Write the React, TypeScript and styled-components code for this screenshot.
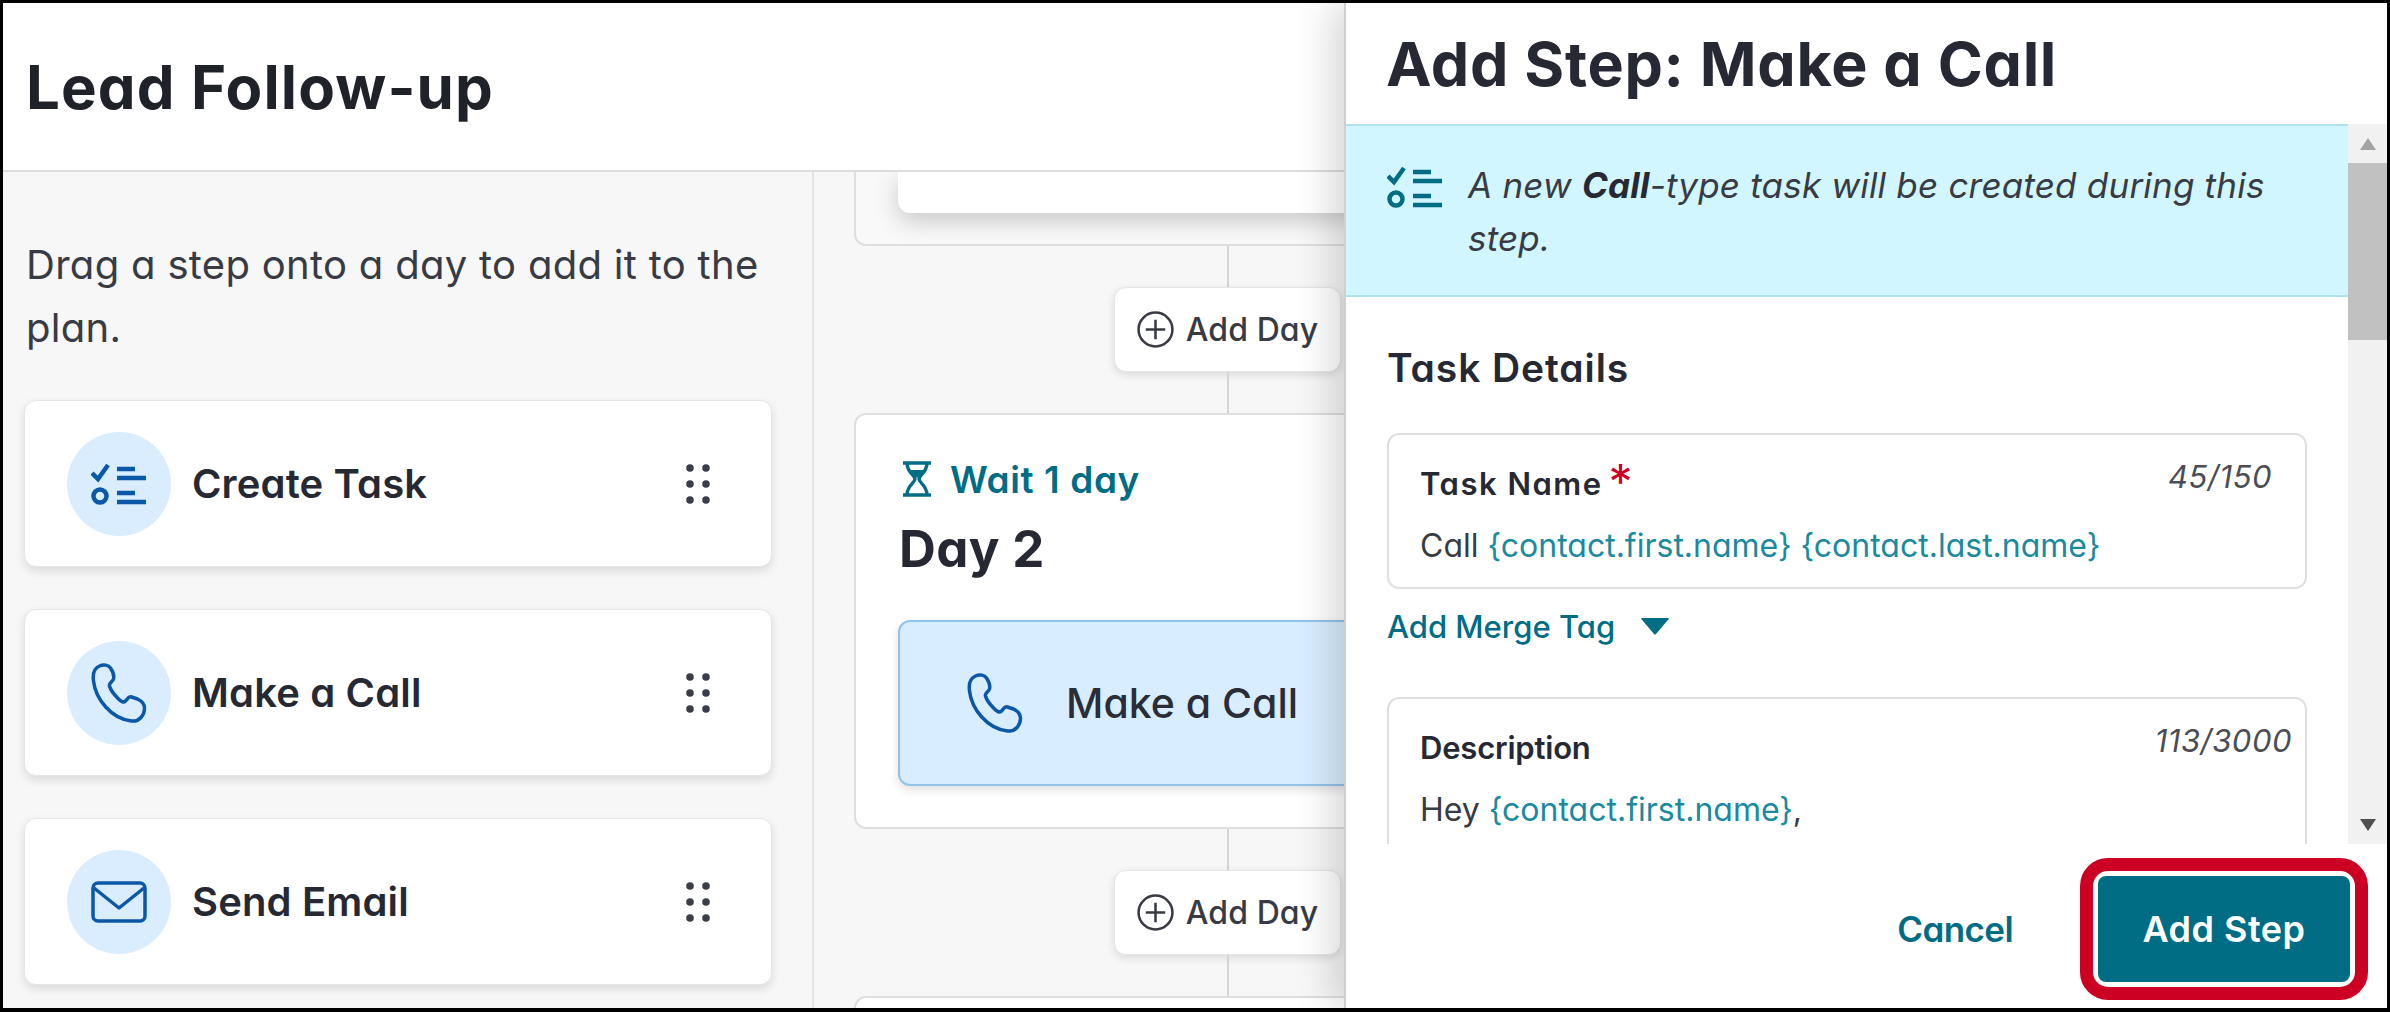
import React from "react";
import styled, { createGlobalStyle } from "styled-components";

const Global = createGlobalStyle`
  html, body { margin: 0; padding: 0; background: #fff; }
  body {
    font-family: Inter, "Open Sans", "Liberation Sans", sans-serif;
    font-feature-settings: "cv11" 1;
    color: #262933;
  }
  * { box-sizing: border-box; }
`;

const Frame = styled.div`
  width: 2390px;
  height: 1012px;
  border: 3px solid #000;
  border-bottom-width: 4px;
  display: flex;
  overflow: hidden;
  background: #fff;
`;

const Workspace = styled.div`
  width: 1341px;
  flex: none;
  display: flex;
  flex-direction: column;
  overflow: hidden;
`;

const Header = styled.header`
  height: 169px;
  flex: none;
  display: flex;
  align-items: center;
  padding: 0 0 0 23px;
  background: #fff;
  border-bottom: 2px solid #dcdcdc;
  position: relative;
  z-index: 2;
`;

const PageTitle = styled.h1`
  margin: 0;
  font-size: 60px;
  font-weight: 700;
  letter-spacing: 1.1px;
  color: #1f2229;
`;

const Canvas = styled.div`
  flex: 1;
  display: flex;
  min-height: 0;
  background: #f7f7f7;
`;

const Sidebar = styled.aside`
  width: 811px;
  flex: none;
  padding: 61px 0 0 21px;
  border-right: 2px solid #e4e4e4;
`;

const Hint = styled.p`
  margin: 0 0 41px 2px;
  font-size: 40px;
  line-height: 63px;
  font-weight: 400;
  letter-spacing: 0.3px;
  color: #383b44;
`;

const StepList = styled.div`
  display: flex;
  flex-direction: column;
  gap: 42px;
  width: 748px;
`;

const StepCard = styled.div`
  height: 167px;
  display: flex;
  align-items: center;
  padding: 0 61px 0 42px;
  background: #fff;
  border: 1px solid #e6e6e6;
  border-radius: 12px;
  box-shadow: 0 4px 10px rgba(0, 0, 0, 0.12);
`;

const IconCircle = styled.span`
  width: 104px;
  height: 104px;
  flex: none;
  border-radius: 50%;
  background: #d9edff;
  color: #0b57a8;
  display: flex;
  align-items: center;
  justify-content: center;
`;

const StepLabel = styled.span`
  flex: 1;
  margin-left: 21px;
  font-size: 40px;
  font-weight: 600;
  letter-spacing: 0.15px;
  color: #262933;
`;

const Plan = styled.section`
  flex: 1;
  min-width: 0;
  padding-left: 40px;
  overflow: hidden;
`;

const PlanColumn = styled.div`
  width: 747px;
  display: flex;
  flex-direction: column;
  align-items: center;
`;

const CutCard = styled.div`
  width: 100%;
  height: 74px;
  flex: none;
  padding: 0 0 0 42px;
  background: #f9f9f9;
  border: 2px solid #dedede;
  border-top: 0;
  border-radius: 0 0 12px 12px;
`;

const CutStep = styled.div`
  height: 41px;
  background: #fff;
  border-radius: 0 0 12px 12px;
  box-shadow: 0 8px 24px rgba(0, 0, 0, 0.2);
`;

const Connector = styled.div`
  width: 2px;
  height: 41px;
  flex: none;
  background: #d4d4d4;
`;

const AddDay = styled.button`
  width: 227px;
  height: 85px;
  flex: none;
  padding: 0;
  display: flex;
  align-items: center;
  justify-content: center;
  gap: 12px;
  font: inherit;
  font-size: 32px;
  font-weight: 500;
  letter-spacing: 0.1px;
  color: #383b44;
  background: #fff;
  border: 1px solid #e6e6e6;
  border-radius: 12px;
  box-shadow: 0 3px 8px rgba(0, 0, 0, 0.12);
`;

const DayCard = styled.div`
  width: 100%;
  height: ${(p: { $h: number }) => p.$h}px;
  flex: none;
  padding: 45px 0 0 42px;
  background: #fff;
  border: 2px solid #dedede;
  border-radius: 12px;
`;

const WaitRow = styled.div`
  display: flex;
  align-items: center;
  gap: 19px;
  height: 38px;
  padding-left: 5px;
  font-size: 37px;
  font-weight: 600;
  letter-spacing: 0.6px;
  color: #006d85;
`;

const DayTitle = styled.h2`
  margin: 0;
  height: 122px;
  display: flex;
  align-items: center;
  padding: 0 0 22px 1px;
  font-size: 51px;
  font-weight: 700;
  letter-spacing: 0.4px;
  color: #262933;
`;

const PlacedStep = styled.div`
  height: 166px;
  width: 703px;
  display: flex;
  align-items: center;
  gap: 43px;
  padding-left: 67px;
  font-size: 41px;
  font-weight: 500;
  color: #2a2d38;
  background: #d8edff;
  border: 2px solid #93c3ea;
  border-radius: 12px;
  box-shadow: 0 4px 10px rgba(0, 0, 0, 0.12);
  svg { color: #0b57a8; }
`;

const Drawer = styled.aside`
  flex: 1;
  min-width: 0;
  display: flex;
  flex-direction: column;
  background: #fff;
  border-left: 2px solid #cfcfcf;
  box-shadow: -12px 0 36px rgba(0, 0, 0, 0.16);
  position: relative;
  z-index: 3;
`;

const DrawerHeader = styled.div`
  height: 121px;
  flex: none;
  display: flex;
  align-items: center;
  padding: 0 0 0 40px;
`;

const DrawerTitle = styled.h2`
  margin: 0;
  font-size: 61px;
  font-weight: 700;
  letter-spacing: 0.7px;
  color: #262933;
`;

const DrawerBody = styled.div`
  height: 720px;
  flex: none;
  display: flex;
`;

const Scroller = styled.div`
  flex: 1;
  min-width: 0;
  overflow: hidden;
`;

const InfoBox = styled.div`
  height: 173px;
  display: flex;
  gap: 25px;
  padding: 33px 40px 0 41px;
  background: #d2f6ff;
  border-top: 2px solid #aee2ec;
  border-bottom: 2px solid #aee2ec;
  color: #006d85;
  svg { margin-top: 7px; }
`;

const InfoText = styled.p`
  margin: 0;
  font-size: 35px;
  line-height: 53px;
  font-style: italic;
  letter-spacing: 0.2px;
  color: #383b44;
  b { font-weight: 700; color: #262933; }
`;

const Section = styled.div`
  padding: 0 41px 0 41px;
`;

const SectionTitle = styled.h3`
  margin: 0;
  height: 136px;
  display: flex;
  align-items: center;
  padding-top: 5px;
  font-size: 39px;
  font-weight: 600;
  letter-spacing: 0.9px;
  color: #262933;
`;

const Field = styled.div`
  height: ${(p: { $h: number }) => p.$h}px;
  padding: 29px 0 0 31px;
  background: #fff;
  border: 2px solid #dfdfdf;
  border-radius: 12px;
`;

const FieldHead = styled.div`
  display: flex;
  justify-content: space-between;
  height: 46px;
`;

const FieldLabel = styled.label`
  display: flex;
  align-items: flex-start;
  gap: 6px;
  font-size: 31px;
  line-height: 40px;
  font-weight: 600;
  letter-spacing: ${(p: { $ls: number }) => p.$ls}px;
  color: #262933;
`;

const Star = styled.span`
  font-size: 48px;
  line-height: 36px;
  font-weight: 400;
  letter-spacing: 0;
  color: #cc0022;
`;

const Count = styled.span`
  margin-right: ${(p: { $right: number }) => p.$right}px;
  margin-top: -7px;
  font-size: 31px;
  line-height: 40px;
  font-style: italic;
  letter-spacing: 0.5px;
  color: #4a4d55;
`;

const FieldValue = styled.div`
  margin-top: 14px;
  font-size: 32px;
  line-height: 44px;
  color: #383b44;
`;

const Tag = styled.span`
  color: #1a8a9e;
`;

const MergeLink = styled.button`
  display: flex;
  align-items: center;
  gap: 26px;
  height: 44px;
  margin: 15px 0 49px;
  padding: 0;
  font: inherit;
  font-size: 31px;
  font-weight: 500;
  color: #006d85;
  background: none;
  border: 0;
`;

const ScrollTrack = styled.div`
  width: 39px;
  flex: none;
  display: flex;
  flex-direction: column;
  align-items: center;
  background: #f1f1f1;
`;

const ScrollArrow = styled.span`
  height: 39px;
  flex: none;
  display: flex;
  align-items: center;
  justify-content: center;
  color: ${(p: { $dark?: boolean }) => (p.$dark ? "#505050" : "#a3a3a3")};
`;

const ScrollThumb = styled.span`
  width: 100%;
  height: 177px;
  flex: none;
  background: #c1c1c1;
`;

const ScrollSpacer = styled.span`
  flex: 1;
`;

const Footer = styled.footer`
  flex: 1;
  display: flex;
  align-items: center;
  justify-content: flex-end;
  gap: 67px;
  padding: 6px 19px 0 0;
`;

const CancelLink = styled.button`
  padding: 0;
  font: inherit;
  font-size: 35px;
  font-weight: 600;
  letter-spacing: -0.6px;
  color: #006d85;
  background: none;
  border: 0;
`;

const CalloutRing = styled.div`
  width: 288px;
  height: 142px;
  padding: 5px;
  background: #fff;
  border: 13px solid #cc0022;
  border-radius: 28px;
`;

const PrimaryButton = styled.button`
  width: 100%;
  height: 100%;
  padding: 0;
  font: inherit;
  font-size: 36px;
  font-weight: 600;
  letter-spacing: 0.5px;
  color: #fff;
  background: #006d85;
  border: 0;
  border-radius: 8px;
`;

const ChecklistIcon = ({ w = 56, h = 42 }: { w?: number; h?: number }) => (
  <svg width={w} height={h} viewBox="0 0 56 42" fill="none" stroke="currentColor" strokeWidth="4.5" style={{ flex: "none" }}>
    <path d="M1 10l6 6L17 2" />
    <path d="M26 6h18M26 15h29M26 30h18M26 39h29" />
    <circle cx="9" cy="33" r="6.5" />
  </svg>
);

const PhoneIcon = ({ w = 56, h = 60 }: { w?: number; h?: number }) => (
  <svg width={w} height={h} viewBox="0 0 55 60" fill="none" stroke="currentColor" strokeWidth="3.5" strokeLinejoin="round" style={{ flex: "none" }}>
    <path d="M8 3C3 5 1 10 2 18c2 18 18 38 38 40 8 1 13-6 13-13 0-5-3-7-7-9l-6-2c-3-1-4 2-6 4-2 2-4 1-7-2-4-4-8-9-9-13-1-3 3-4 4-7 1-4-1-8-3-11-2-3-7-4-11-2z" />
  </svg>
);

const MailIcon = () => (
  <svg width="56" height="42" viewBox="0 0 56 42" fill="none" stroke="currentColor" strokeWidth="3.5" strokeLinejoin="round">
    <rect x="2" y="2" width="52" height="38" rx="5" />
    <path d="M3 7l25 20L53 7" />
  </svg>
);

const GripIcon = () => (
  <svg width="24" height="40" viewBox="0 0 24 40" fill="#3a3d47" style={{ flex: "none" }}>
    <circle cx="4" cy="4" r="3.8" />
    <circle cx="20" cy="4" r="3.8" />
    <circle cx="4" cy="20" r="3.8" />
    <circle cx="20" cy="20" r="3.8" />
    <circle cx="4" cy="36" r="3.8" />
    <circle cx="20" cy="36" r="3.8" />
  </svg>
);

const PlusCircleIcon = () => (
  <svg width="37" height="37" viewBox="0 0 38 38" fill="none" stroke="#383b44" strokeWidth="2.6" style={{ flex: "none" }}>
    <circle cx="19" cy="19" r="17.4" />
    <path d="M19 9v20M9 19h20" />
  </svg>
);

const HourglassIcon = () => (
  <svg width="28" height="36" viewBox="0 0 28 36" fill="none" stroke="currentColor" strokeWidth="3.4" style={{ flex: "none" }}>
    <path d="M0 2h28M0 34h28M4 2c0 10 8 12 8 16S4 24 4 34M24 2c0 10-8 12-8 16s8 6 8 16" />
    <path d="M7 9h14l-7 8z" fill="currentColor" stroke="none" />
  </svg>
);

const Triangle = ({ w = 28, h = 17 }: { w?: number; h?: number }) => (
  <svg width={w} height={h} viewBox="0 0 28 17" fill="currentColor">
    <path d="M1 0h26q1 0 .5 1.2L15 16q-1 1-2 0L.5 1.2Q0 0 1 0z" />
  </svg>
);

const palette = [
  { label: "Create Task", icon: <ChecklistIcon /> },
  { label: "Make a Call", icon: <PhoneIcon /> },
  { label: "Send Email", icon: <MailIcon /> },
];

const App = () => {
  return (
    <>
      <Global />
      <Frame>
        <Workspace>
          <Header>
            <PageTitle>Lead Follow-up</PageTitle>
          </Header>
          <Canvas>
            <Sidebar>
              <Hint>Drag a step onto a day to add it to the plan.</Hint>
              <StepList>
                {palette.map((s) => (
                  <StepCard key={s.label}>
                    <IconCircle>{s.icon}</IconCircle>
                    <StepLabel>{s.label}</StepLabel>
                    <GripIcon />
                  </StepCard>
                ))}
              </StepList>
            </Sidebar>
            <Plan>
              <PlanColumn>
                <CutCard>
                  <CutStep />
                </CutCard>
                <Connector />
                <AddDay>
                  <PlusCircleIcon />
                  Add Day
                </AddDay>
                <Connector />
                <DayCard $h={416}>
                  <WaitRow>
                    <HourglassIcon />
                    Wait 1 day
                  </WaitRow>
                  <DayTitle>Day 2</DayTitle>
                  <PlacedStep>
                    <PhoneIcon />
                    Make a Call
                  </PlacedStep>
                </DayCard>
                <Connector />
                <AddDay>
                  <PlusCircleIcon />
                  Add Day
                </AddDay>
                <Connector />
                <DayCard $h={100} />
              </PlanColumn>
            </Plan>
          </Canvas>
        </Workspace>
        <Drawer>
          <DrawerHeader>
            <DrawerTitle>Add Step: Make a Call</DrawerTitle>
          </DrawerHeader>
          <DrawerBody>
            <Scroller>
              <InfoBox>
                <ChecklistIcon />
                <InfoText>
                  A new <b>Call</b>-type task will be created during this step.
                </InfoText>
              </InfoBox>
              <Section>
                <SectionTitle>Task Details</SectionTitle>
                <Field $h={156}>
                  <FieldHead>
                    <FieldLabel $ls={1.5}>
                      Task Name<Star>*</Star>
                    </FieldLabel>
                    <Count $right={33}>45/150</Count>
                  </FieldHead>
                  <FieldValue>
                    Call <Tag>{"{contact.first.name}"}</Tag> <Tag>{"{contact.last.name}"}</Tag>
                  </FieldValue>
                </Field>
                <MergeLink>
                  Add Merge Tag
                  <Triangle />
                </MergeLink>
                <Field $h={400}>
                  <FieldHead>
                    <FieldLabel $ls={-0.2}>Description</FieldLabel>
                    <Count $right={13}>113/3000</Count>
                  </FieldHead>
                  <FieldValue>
                    Hey <Tag>{"{contact.first.name}"}</Tag>,
                  </FieldValue>
                </Field>
              </Section>
            </Scroller>
            <ScrollTrack>
              <ScrollArrow>
                <svg width="16" height="12" viewBox="0 0 16 12" fill="currentColor"><path d="M8 0l8 12H0z" /></svg>
              </ScrollArrow>
              <ScrollThumb />
              <ScrollSpacer />
              <ScrollArrow $dark>
                <svg width="16" height="12" viewBox="0 0 16 12" fill="currentColor"><path d="M0 0h16L8 12z" /></svg>
              </ScrollArrow>
            </ScrollTrack>
          </DrawerBody>
          <Footer>
            <CancelLink>Cancel</CancelLink>
            <CalloutRing>
              <PrimaryButton>Add Step</PrimaryButton>
            </CalloutRing>
          </Footer>
        </Drawer>
      </Frame>
    </>
  );
};

export default App;
